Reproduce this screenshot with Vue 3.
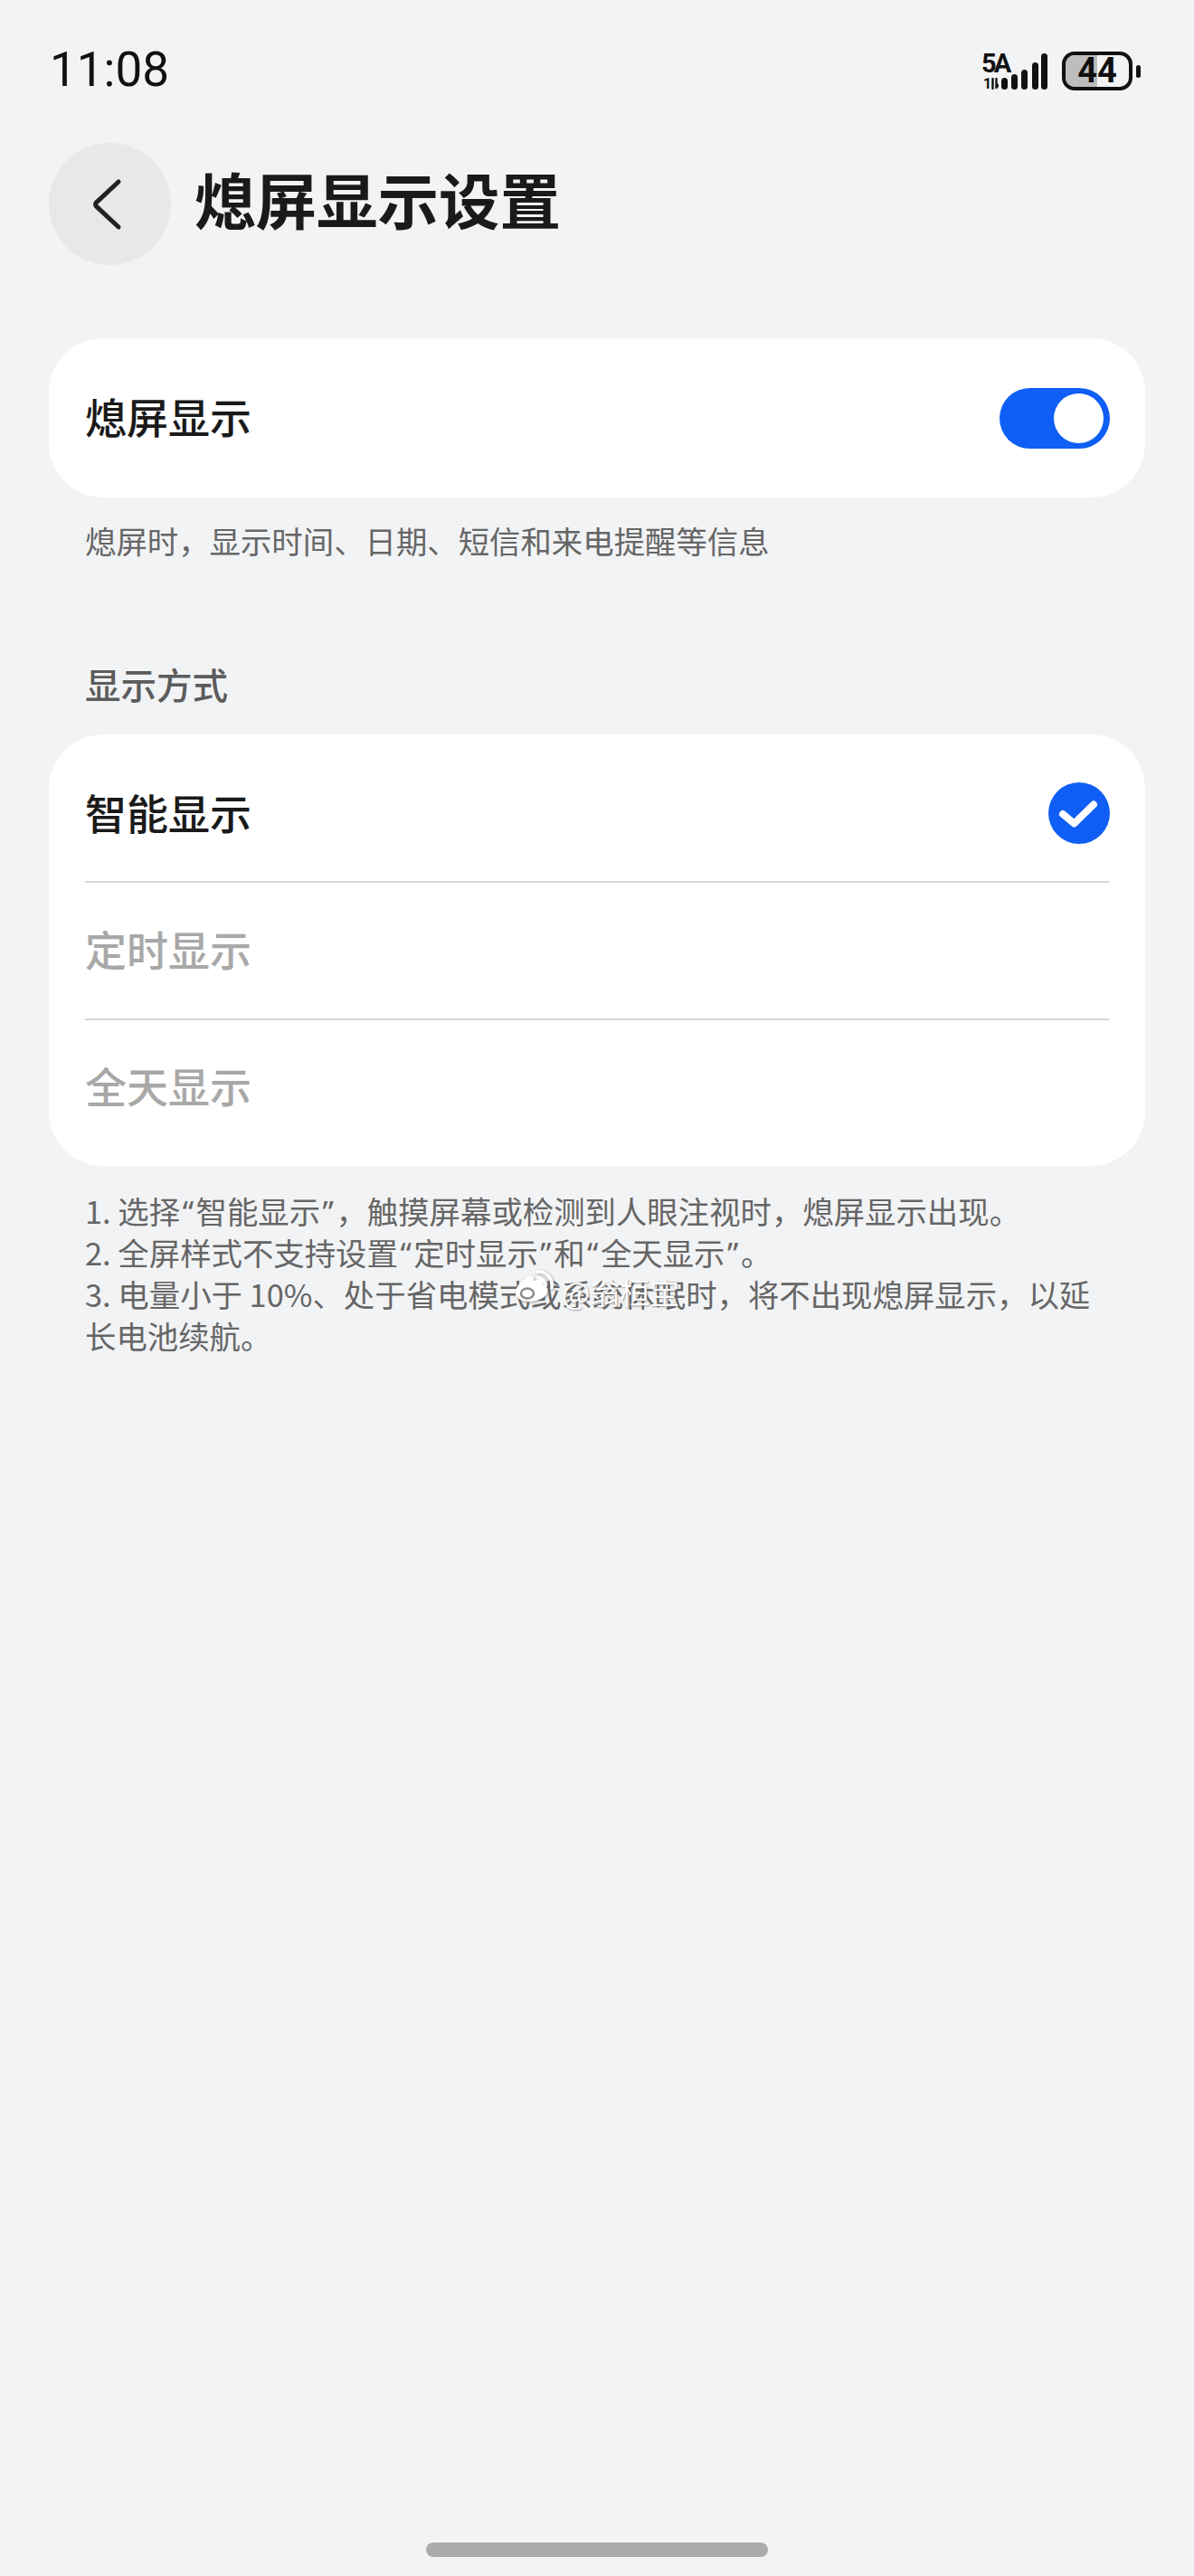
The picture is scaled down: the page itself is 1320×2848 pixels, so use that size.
<script setup>
// les guillemets sont étroits dans la capture, on les sort du texte CJK
const notes = [
  "1. 选择“智能显示”，触摸屏幕或检测到人眼注视时，熄屏显示出现。",
  "2. 全屏样式不支持设置“定时显示”和“全天显示”。",
  "3. 电量小于 10%、处于省电模式或系统休眠时，将不出现熄屏显示，以延长电池续航。",
].map((n) => n.split(/([“”])/));
const bars = [
  { x: 0, y: 27, h: 13 },
  { x: 11, y: 23, h: 17 },
  { x: 22, y: 18, h: 22 },
  { x: 34, y: 10, h: 30 },
  { x: 44, y: 0, h: 40 },
];
</script>

<template>
  <div class="page">
    <header class="status">
      <span class="time">11:08</span>
      <div class="statusIcons">
        <div class="net">
          <span class="netType">5A</span>
          <span class="netSim">1</span>
          <svg class="netArrows" width="9" height="13" viewBox="0 0 9 13">
            <path d="M2.5 12V1M6.5 1v10M6.5 11l2-3" fill="none" stroke="#111" stroke-width="2.4" stroke-linecap="round" />
          </svg>
        </div>
        <svg class="signal" width="52" height="40" viewBox="0 0 52 40">
          <rect v-for="b in bars" :key="b.x" :x="b.x" :y="b.y" width="7" :height="b.h" rx="3.5" fill="#111" />
        </svg>
        <div class="battery">
          <div class="batteryBody">
            <div class="batteryFill"></div>
            <span class="batteryText">44</span>
          </div>
          <div class="batteryCap"></div>
        </div>
      </div>
    </header>

    <div class="titleRow">
      <button class="back" aria-label="返回">
        <svg width="36" height="62" viewBox="0 0 36 62">
          <path d="M31 6 L6.2 29.2 Q5 31 6.2 32.8 L31 56" fill="none" stroke="#222" stroke-width="5" stroke-linecap="round" stroke-linejoin="round" />
        </svg>
      </button>
      <h1 class="title">熄屏显示设置</h1>
    </div>

    <section class="card switchCard">
      <span class="label">熄屏显示</span>
      <div class="switch"><div class="knob"></div></div>
    </section>
    <p class="desc">熄屏时，显示时间、日期、短信和来电提醒等信息</p>

    <h2 class="groupTitle">显示方式</h2>
    <section class="card optionCard">
      <div class="option first">
        <span class="label">智能显示</span>
        <svg class="check" width="68" height="68" viewBox="0 0 68 68">
          <circle cx="34" cy="34" r="34" fill="#0f5ef5" />
          <path d="M16 35 L28.5 45.5 L50 24.5" fill="none" stroke="#fff" stroke-width="8" stroke-linecap="round" stroke-linejoin="round" />
        </svg>
      </div>
      <div class="option second">
        <span class="label off">定时显示</span>
      </div>
      <div class="option last">
        <span class="label off">全天显示</span>
      </div>
    </section>

    <div class="notes">
      <p v-for="(parts, i) in notes" :key="i">
        <template v-for="(part, j) in parts" :key="j">
          <span v-if="part === '“' || part === '”'" class="quote">{{ part }}</span>
          <template v-else>{{ part }}</template>
        </template>
      </p>
      <div class="watermark">
        <svg class="wmLogo" width="46" height="38" viewBox="0 0 46 38">
          <path d="M3 26c0-6 6-13 13-17 5-2.500 8-1 7 4 5-2 11-2 11 2 0 1.500-.5 2-.5 3 3 1 5 3 5 6 0 6-9 12-20 12C9 36 3 32 3 26z" fill="#fff" />
          <ellipse cx="16" cy="27" rx="7" ry="5.500" fill="none" stroke="#8a8a8a" stroke-width="2.500" />
          <path d="M27 3a15 15 0 0 1 16 18M28 10a8 8 0 0 1 8 9" fill="none" stroke="#fff" stroke-width="3.500" stroke-linecap="round" />
        </svg>
        <span>@翁桓宝</span>
      </div>
    </div>

    <div class="homeBar"></div>
  </div>
</template>

<style>
body {
  margin: 0;
  background: #f2f3f5;
}
</style>

<style scoped>
.page {
  position: relative;
  box-sizing: border-box;
  width: 1320px;
  height: 2848px;
  padding: 0 54px;
  display: flex;
  flex-direction: column;
  background: #f2f3f5;
  font-family: "Noto Sans CJK SC", "Noto Sans", sans-serif;
  overflow: hidden;
}

.status {
  height: 158px;
  display: flex;
  justify-content: space-between;
  align-items: flex-start;
}

.time {
  margin-top: 44px;
  margin-left: 1px;
  font-family: Roboto, sans-serif;
  font-size: 53px;
  line-height: 66px;
  color: #111;
}

.statusIcons {
  margin-top: 57px;
  margin-right: 5px;
  display: flex;
  align-items: flex-start;
}

.net {
  position: relative;
  width: 22px;
  height: 42px;
  color: #111;
  font-family: Roboto, sans-serif;
  font-weight: 700;
}

.netType {
  position: absolute;
  left: 0;
  top: 0;
  font-size: 29px;
  line-height: 26px;
  letter-spacing: -3px;
}

.netSim {
  position: absolute;
  left: 2px;
  top: 28px;
  font-size: 16px;
  line-height: 15px;
}

.netArrows {
  position: absolute;
  left: 10px;
  top: 29px;
}

.signal {
  margin-top: 2px;
}

.battery {
  margin-left: 15px;
  display: flex;
  align-items: center;
}

.batteryBody {
  position: relative;
  box-sizing: border-box;
  width: 78px;
  height: 43px;
  border: 4px solid #111;
  border-radius: 14px;
  overflow: hidden;
  display: flex;
  align-items: center;
  justify-content: center;
}

.batteryFill {
  position: absolute;
  left: 0;
  top: 0;
  bottom: 0;
  width: 35px;
  background: #bdbdbd;
}

.batteryText {
  position: relative;
  font-family: Roboto, sans-serif;
  font-weight: 700;
  font-size: 38px;
  line-height: 35px;
  color: #111;
}

.batteryCap {
  width: 5px;
  height: 14px;
  margin-left: 4px;
  border-radius: 3px;
  background: #111;
}

.titleRow {
  display: flex;
  align-items: center;
  gap: 26px;
}

.back {
  width: 135px;
  height: 135px;
  padding: 0;
  border: none;
  border-radius: 50%;
  background: #e7e8ea;
  display: flex;
  align-items: center;
  justify-content: center;
}

.back svg {
  margin-left: -8px;
}

.title {
  margin: 0;
  padding-bottom: 14px;
  font-size: 67.5px;
  line-height: 80px;
  font-weight: 700;
  color: #1a1a1a;
}

.card {
  background: #fff;
  border-radius: 60px;
}

.switchCard {
  margin-top: 81px;
  height: 176px;
  box-sizing: border-box;
  padding: 0 39px 0 40px;
  display: flex;
  align-items: center;
  justify-content: space-between;
}

.switchCard .label {
  margin-bottom: 6px;
}

.label {
  font-size: 46px;
  line-height: 60px;
  font-weight: 500;
  color: #1a1a1a;
}

.label.off {
  color: #a8a8a8;
}

.switch {
  width: 122px;
  height: 67px;
  box-sizing: border-box;
  padding: 6px 7px;
  border-radius: 34px;
  background: #0f5ef5;
  display: flex;
  justify-content: flex-end;
}

.knob {
  width: 55px;
  height: 55px;
  border-radius: 50%;
  background: #fff;
}

.desc {
  margin: 22px 0 0 40px;
  font-size: 34.4px;
  line-height: 50px;
  color: #666;
}

.groupTitle {
  margin: 109px 0 0 40px;
  font-size: 39.5px;
  line-height: 50px;
  font-weight: 500;
  color: #5c5c5c;
}

.optionCard {
  margin-top: 31px;
  padding: 0 40px;
}

.option {
  box-sizing: border-box;
  display: flex;
  align-items: center;
  justify-content: space-between;
  border-bottom: 2px solid #d6d6d8;
}

.option.first {
  height: 164px;
  padding-top: 8px;
}

.option.second {
  height: 152px;
  padding-bottom: 6px;
}

.option.last {
  height: 161px;
  padding-bottom: 20px;
  border-bottom: none;
}

.check {
  margin: 0 -1px 0 0;
  position: relative;
  top: 2px;
}

.notes {
  position: relative;
  margin: 26px 39px 0 40px;
  font-size: 34.4px;
  line-height: 46px;
  color: #666;
}

.notes p {
  margin: 0;
}

.quote {
  padding: 0 2.5px;
  font-family: "Noto Sans", sans-serif;
  line-height: 0;
}

.watermark {
  position: absolute;
  left: 473px;
  top: 88px;
  display: flex;
  align-items: flex-start;
  gap: 8px;
  color: #fff;
  font-size: 33px;
  line-height: 44px;
  white-space: nowrap;
  text-shadow: 1px 1px 2px rgba(90, 90, 90, 0.6);
}

.wmLogo {
  filter: drop-shadow(1px 1px 1.5px rgba(90, 90, 90, 0.6));
}

.watermark span {
  margin-top: 3px;
}

.homeBar {
  margin-top: auto;
  margin-bottom: 21px;
  align-self: center;
  width: 378px;
  height: 16px;
  border-radius: 8px;
  background: #aaabad;
}
</style>
